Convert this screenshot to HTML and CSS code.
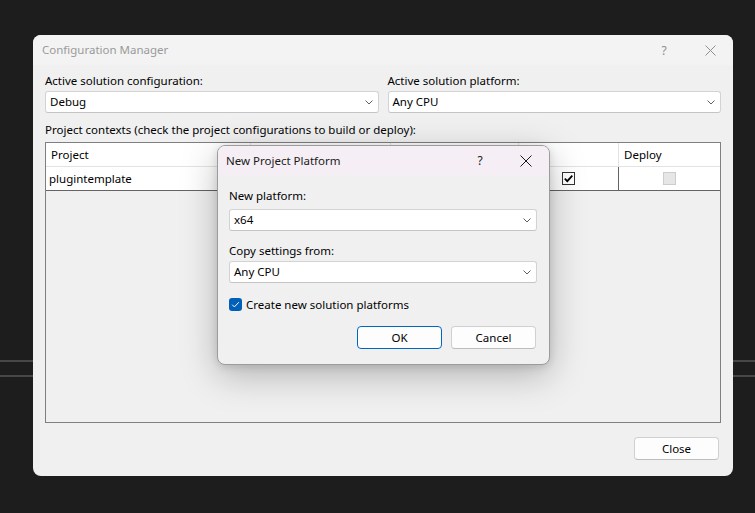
FILE: index.html
```html
<!DOCTYPE html>
<html>
<head>
<meta charset="utf-8">
<link rel="stylesheet" href="styles.css">
</head>
<body>
<div class="cm">
  <div class="cm-title">
    <span class="title-text">Configuration Manager</span>
    <span class="cap-btn cap-help">?</span>
    <span class="cap-btn"><svg width="11" height="11" viewBox="0 0 11 11"><path d="M0.5 0.5 L10.5 10.5 M10.5 0.5 L0.5 10.5" stroke="#8f8f8f" stroke-width="1" fill="none"/></svg></span>
  </div>
  <div class="cm-body">
    <div class="top-fields">
      <div class="field">
        <div class="label">Active solution configuration:</div>
        <div class="combo"><span>Debug</span><svg class="chev" width="8" height="5" viewBox="0 0 8 5"><path d="M0.5 0.5 L4 4 L7.5 0.5" stroke="#606060" stroke-width="1" fill="none"/></svg></div>
      </div>
      <div class="field">
        <div class="label">Active solution platform:</div>
        <div class="combo"><span>Any CPU</span><svg class="chev" width="8" height="5" viewBox="0 0 8 5"><path d="M0.5 0.5 L4 4 L7.5 0.5" stroke="#606060" stroke-width="1" fill="none"/></svg></div>
      </div>
    </div>
    <div class="label contexts">Project contexts (check the project configurations to build or deploy):</div>
    <div class="grid">
      <div class="grid-line head">
        <div class="cell first">Project</div>
        <div class="cell"></div>
        <div class="cell"></div>
        <div class="cell"></div>
        <div class="cell">Deploy</div>
      </div>
      <div class="grid-line row">
        <div class="cell first">plugintemplate</div>
        <div class="cell"></div>
        <div class="cell"></div>
        <div class="cell center"><span class="chk chk-on"><svg width="11" height="11" viewBox="0 0 11 11"><path d="M1.8 5.6 L4.3 8.1 L9.3 2.6" stroke="#000" stroke-width="1.8" fill="none"/></svg></span></div>
        <div class="cell center"><span class="chk chk-dis"></span></div>
      </div>
    </div>
    <div class="cm-footer"><button class="btn">Close</button></div>
  </div>
</div>

<div class="npp">
  <div class="npp-title">
    <span class="npp-title-text">New Project Platform</span>
    <span class="cap-btn small">?</span>
    <span class="cap-btn small"><svg width="12" height="12" viewBox="0 0 12 12"><path d="M0.5 0.5 L11.5 11.5 M11.5 0.5 L0.5 11.5" stroke="#1a1a1a" stroke-width="1" fill="none"/></svg></span>
  </div>
  <div class="npp-body">
    <div class="label l1">New platform:</div>
    <div class="combo"><span>x64</span><svg class="chev" width="8" height="5" viewBox="0 0 8 5"><path d="M0.5 0.5 L4 4 L7.5 0.5" stroke="#606060" stroke-width="1" fill="none"/></svg></div>
    <div class="label l2">Copy settings from:</div>
    <div class="combo"><span>Any CPU</span><svg class="chev" width="8" height="5" viewBox="0 0 8 5"><path d="M0.5 0.5 L4 4 L7.5 0.5" stroke="#606060" stroke-width="1" fill="none"/></svg></div>
    <div class="check-row">
      <span class="blue-chk"><svg width="13" height="13" viewBox="0 0 13 13"><path d="M3.2 6.7 L5.4 8.9 L9.9 4.2" stroke="#fff" stroke-width="1" fill="none"/></svg></span>
      <span>Create new solution platforms</span>
    </div>
    <div class="buttons">
      <button class="btn primary">OK</button>
      <button class="btn">Cancel</button>
    </div>
  </div>
</div>
</body>
</html>
```

FILE: styles.css
```css
* { box-sizing: border-box; }

html, body { margin: 0; padding: 0; }

body {
  width: 755px;
  height: 513px;
  overflow: hidden;
  position: relative;
  font-family: "Noto Sans", sans-serif;
  font-size: 11.5px;
  color: #000;
  background-color: #1d1d1d;
  background-image: linear-gradient(#474747, #474747), linear-gradient(#474747, #474747);
  background-size: 100% 2px, 100% 2px;
  background-position: 0 360px, 0 375px;
  background-repeat: no-repeat;
}

/* ---------- Configuration Manager window ---------- */
.cm {
  position: absolute;
  left: 33px;
  top: 35px;
  width: 700px;
  height: 441px;
  background: #f0f0f0;
  border-radius: 8px;
  overflow: hidden;
  display: flex;
  flex-direction: column;
}

.cm-title {
  height: 30px;
  display: flex;
  align-items: center;
  background: #f3f3f3;
  padding-left: 9px;
}

.title-text {
  flex: 1;
  color: #9a9a9a;
  line-height: 16px;
}

.cap-btn {
  width: 46px;
  height: 30px;
  display: flex;
  align-items: center;
  justify-content: center;
  color: #8f8f8f;
  font-size: 12px;
}

.cap-btn svg { display: block; }

.cm-body {
  flex: 1;
  padding: 8px 12px 0;
  display: flex;
  flex-direction: column;
}

.top-fields {
  display: grid;
  grid-template-columns: 1fr 1fr;
  column-gap: 9px;
}

.label {
  line-height: 16px;
  height: 16px;
  white-space: nowrap;
}

.field .label { margin-bottom: 2px; }

.combo {
  height: 22px;
  background: #fff;
  border: 1px solid #d3d3d3;
  border-bottom-color: #c4c4c4;
  border-radius: 3px;
  padding: 0 5px 0 4px;
  display: flex;
  align-items: center;
  justify-content: space-between;
  line-height: 16px;
}

.chev { display: block; }

.contexts {
  margin-top: 9px;
  margin-bottom: 4px;
}

/* ---------- grid ---------- */
.grid {
  height: 281px;
  border: 1px solid #7f7f7f;
  background: #f0f0f0;
}

.grid-line {
  display: grid;
  grid-template-columns: 204px 140px 128px 100px 1fr;
  height: 24px;
  background: #fff;
}

.head { border-bottom: 1px solid #e3e3e3; }
.row { border-bottom: 1px solid #646464; }

.cell {
  display: flex;
  align-items: center;
  line-height: 16px;
  padding-left: 5px;
  white-space: nowrap;
}

.head .cell + .cell { border-left: 1px solid #e3e3e3; }
.row .cell + .cell { border-left: 1px solid #646464; }
.row .cell.first { padding-left: 3px; }

.cell.center { justify-content: center; padding-left: 0; }

.chk {
  width: 13px;
  height: 13px;
  display: flex;
  align-items: center;
  justify-content: center;
}

.chk-on {
  background: #fff;
  border: 1px solid #333;
}

.chk-dis {
  background: #e6e6e6;
  border: 1px solid #cdcdcd;
}

.cm-footer {
  margin-top: 14px;
  display: flex;
  justify-content: flex-end;
  padding-right: 2px;
}

.btn {
  width: 85px;
  height: 23px;
  border: 1px solid #d0d0d0;
  border-bottom-color: #bdbdbd;
  border-radius: 4px;
  background: #fdfdfd;
  font-family: "Noto Sans", sans-serif;
  font-size: 11.5px;
  color: #000;
  padding: 0;
  line-height: 16px;
}

.btn.primary {
  border: 1px solid #0067c0;
}

/* ---------- New Project Platform dialog ---------- */
.npp {
  position: absolute;
  left: 217px;
  top: 145px;
  width: 333px;
  height: 220px;
  background: #f0f0f0;
  border: 1px solid #9c9c9c;
  border-radius: 8px;
  overflow: hidden;
  box-shadow: 0 10px 36px rgba(0, 0, 0, 0.26), 0 2px 8px rgba(0, 0, 0, 0.12);
}

.npp-title {
  height: 29px;
  display: flex;
  align-items: center;
  background: #f6eef5;
  padding-left: 8px;
}

.npp-title-text {
  flex: 1;
  color: #1a1a1a;
  line-height: 16px;
}

.cap-btn.small {
  height: 29px;
  color: #1a1a1a;
}

.npp-body {
  padding: 13px 12px 0 11px;
  display: flex;
  flex-direction: column;
}

.l1 { margin-bottom: 5px; }
.l2 { margin-top: 12px; margin-bottom: 2px; }

.check-row {
  margin-top: 15px;
  height: 13px;
  display: flex;
  align-items: center;
  gap: 4px;
  line-height: 16px;
}

.blue-chk {
  width: 13px;
  height: 13px;
  border-radius: 3px;
  background: #005fb8;
  display: block;
}

.blue-chk svg { display: block; }

.buttons {
  margin-top: 15px;
  display: flex;
  justify-content: flex-end;
  gap: 9px;
  padding-right: 1px;
}
```
